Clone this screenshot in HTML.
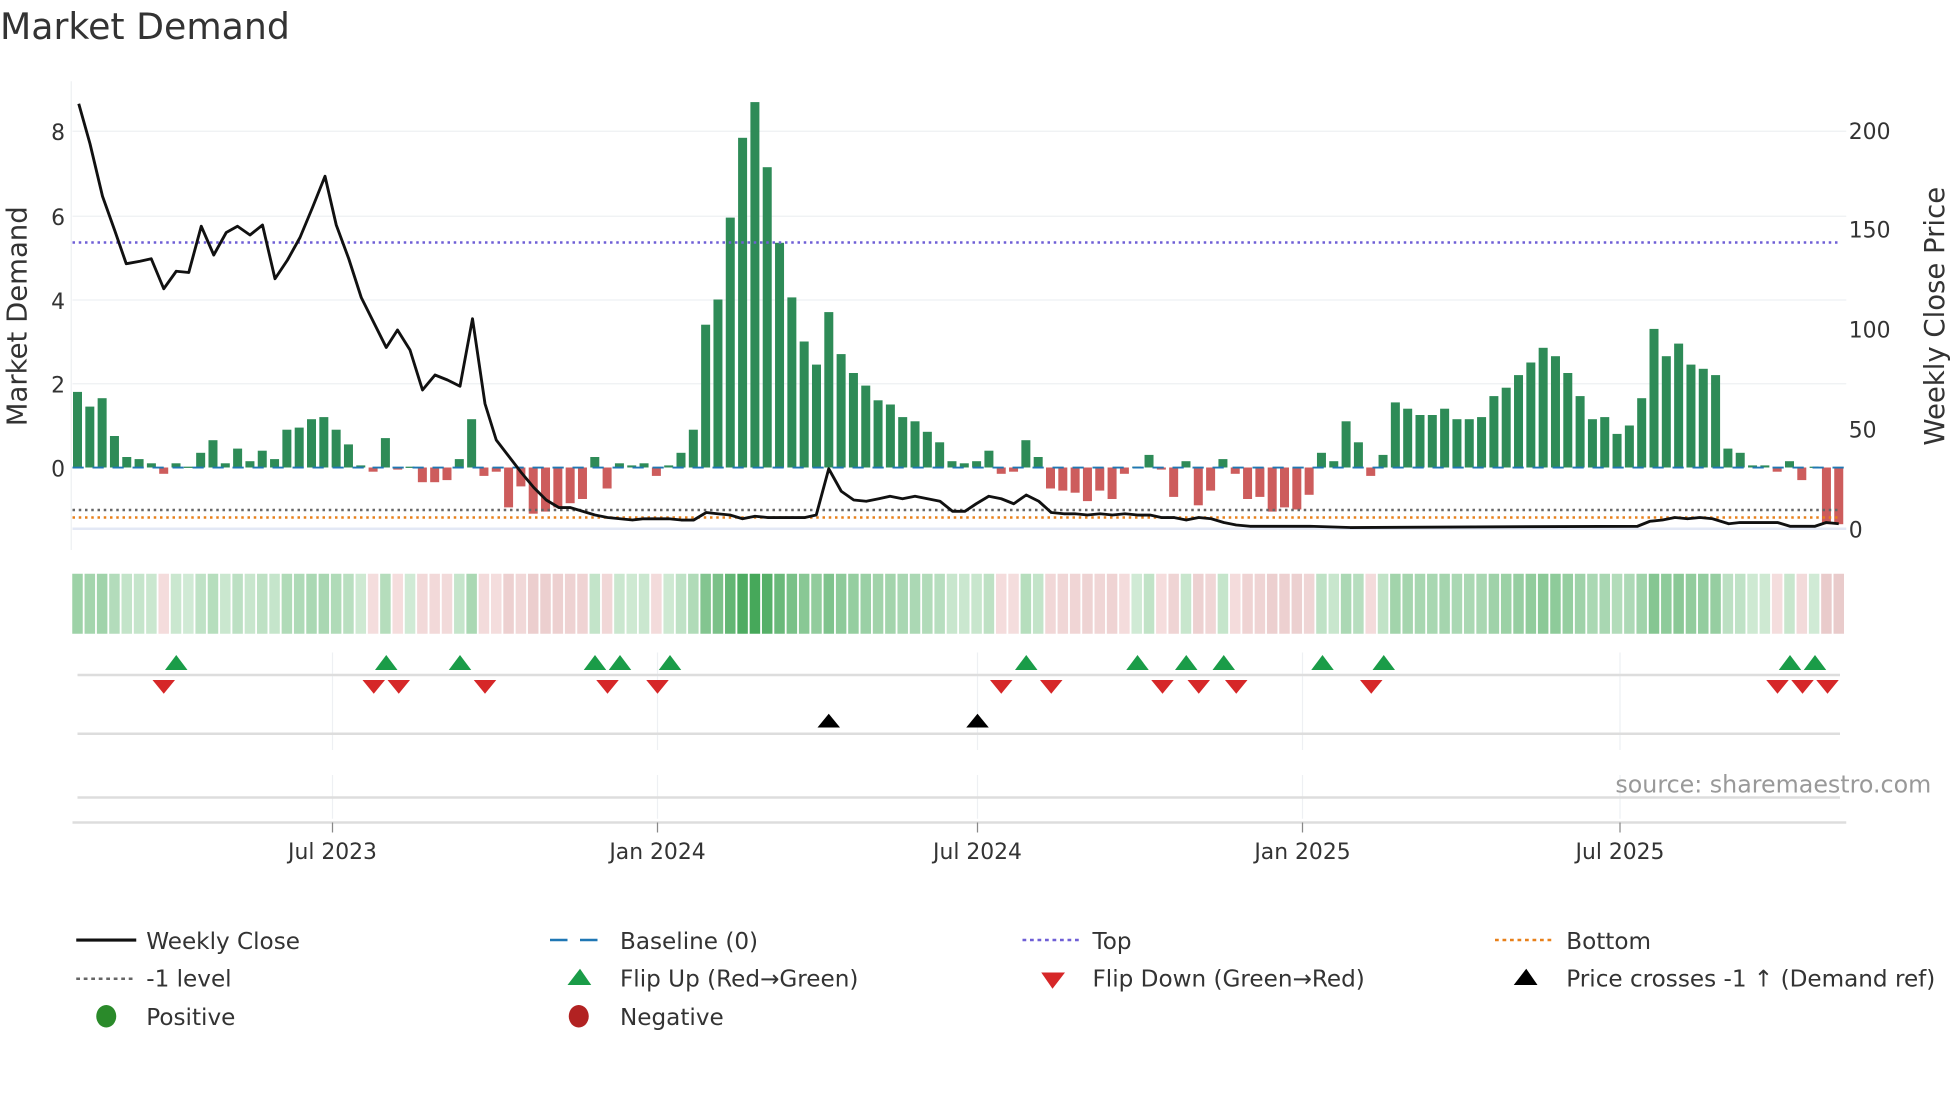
<!DOCTYPE html>
<html><head><meta charset="utf-8"><style>
html,body{margin:0;padding:0;background:#fff;overflow:hidden}
svg{display:block;font-family:"DejaVu Sans","Liberation Sans",sans-serif}
</style></head><body>
<svg id="s" width="1960" height="1102" viewBox="0 0 1568 881.6" xmlns="http://www.w3.org/2000/svg">
<rect width="1568" height="882" fill="#fff"/>
<text x="0" y="31" font-size="29" fill="#333">Market Demand</text>
<g stroke="#eef0f3" stroke-width="1">
<line x1="58" x2="1477" y1="105" y2="105"/><line x1="58" x2="1477" y1="173" y2="173"/>
<line x1="58" x2="1477" y1="240" y2="240"/><line x1="58" x2="1477" y1="307" y2="307"/>
<line x1="57" x2="57" y1="65" y2="440"/>
<line x1="266" x2="266" y1="522" y2="600"/><line x1="526" x2="526" y1="522" y2="600"/>
<line x1="782" x2="782" y1="522" y2="600"/><line x1="1042" x2="1042" y1="522" y2="600"/><line x1="1296" x2="1296" y1="522" y2="600"/>
<line x1="266" x2="266" y1="620" y2="655"/><line x1="526" x2="526" y1="620" y2="655"/>
<line x1="782" x2="782" y1="620" y2="655"/><line x1="1042" x2="1042" y1="620" y2="655"/><line x1="1296" x2="1296" y1="620" y2="655"/>
</g>
<line x1="58" x2="1477" y1="423" y2="423" stroke="#e3e8f5" stroke-width="2"/>
<g id="bars"></g>
<line x1="58" x2="1477" y1="374" y2="374" stroke="#1f77b4" stroke-width="1.5" stroke-dasharray="9,7"/>
<line x1="58" x2="1472" y1="194" y2="194" stroke="#6f5fd6" stroke-width="2" stroke-dasharray="2,3"/>
<line x1="58" x2="1472" y1="408" y2="408" stroke="#666" stroke-width="2" stroke-dasharray="2,3"/>
<line x1="58" x2="1472" y1="414" y2="414" stroke="#e8801a" stroke-width="2" stroke-dasharray="2,3"/>
<polyline id="price" fill="none" stroke="#111" stroke-width="2.3" stroke-linejoin="round"/>
<g id="heat"></g>
<g stroke="#ddd" stroke-width="2">
<line x1="62" x2="1472" y1="540" y2="540"/><line x1="62" x2="1472" y1="587" y2="587"/>
<line x1="62" x2="1472" y1="638" y2="638"/><line x1="58" x2="1477" y1="658" y2="658"/>
</g>
<g stroke="#888" stroke-width="1">
<line x1="266" x2="266" y1="658" y2="666"/><line x1="526" x2="526" y1="658" y2="666"/>
<line x1="782" x2="782" y1="658" y2="666"/><line x1="1042" x2="1042" y1="658" y2="666"/><line x1="1296" x2="1296" y1="658" y2="666"/>
</g>
<g id="tri"></g>
<g font-size="17.5" fill="#333">
<text x="52" y="112" text-anchor="end">8</text><text x="52" y="180" text-anchor="end">6</text>
<text x="52" y="247" text-anchor="end">4</text><text x="52" y="314" text-anchor="end">2</text>
<text x="52" y="381" text-anchor="end">0</text>
<text x="1479" y="111">200</text><text x="1479" y="190">150</text><text x="1479" y="270">100</text>
<text x="1479" y="350">50</text><text x="1479" y="430">0</text>
<text x="266" y="687" text-anchor="middle">Jul 2023</text>
<text x="526" y="687" text-anchor="middle">Jan 2024</text>
<text x="782" y="687" text-anchor="middle">Jul 2024</text>
<text x="1042" y="687" text-anchor="middle">Jan 2025</text>
<text x="1296" y="687" text-anchor="middle">Jul 2025</text>
<text transform="translate(21,253) rotate(-90)" text-anchor="middle" font-size="22">Market Demand</text>
<text transform="translate(1555,253) rotate(-90)" text-anchor="middle" font-size="22">Weekly Close Price</text>
<text x="1545" y="634" text-anchor="end" fill="#999" font-size="19">source: sharemaestro.com</text>
</g>
<g font-size="18.5" fill="#333">
<line x1="61" x2="109" y1="752" y2="752" stroke="#111" stroke-width="2.5"/><text x="117" y="759">Weekly Close</text>
<line x1="440" x2="488" y1="752" y2="752" stroke="#1f77b4" stroke-width="2" stroke-dasharray="14,10"/><text x="496" y="759">Baseline (0)</text>
<line x1="818" x2="866" y1="752" y2="752" stroke="#6f5fd6" stroke-width="2" stroke-dasharray="3,3"/><text x="874" y="759">Top</text>
<line x1="1196" x2="1244" y1="752" y2="752" stroke="#e8801a" stroke-width="2" stroke-dasharray="3,3"/><text x="1253" y="759">Bottom</text>
<line x1="61" x2="109" y1="783" y2="783" stroke="#666" stroke-width="2" stroke-dasharray="3,3"/><text x="117" y="789">-1 level</text>
<polygon points="454,788 464,775 473,788" fill="#1a9c48"/><text x="496" y="789">Flip Up (Red→Green)</text>
<polygon points="833,778 852,778 842,791" fill="#d62728"/><text x="874" y="789">Flip Down (Green→Red)</text>
<polygon points="1211,788 1221,775 1230,788" fill="#000"/><text x="1253" y="789">Price crosses -1 ↑ (Demand ref)</text>
<ellipse cx="85" cy="813" rx="8" ry="9" fill="#2a8a2a"/><text x="117" y="820">Positive</text>
<ellipse cx="463" cy="813" rx="8" ry="9" fill="#b22222"/><text x="496" y="820">Negative</text>
</g>
</svg>
<script>
var v=[1.8,1.45,1.65,0.75,0.25,0.2,0.1,-0.15,0.1,0.02,0.35,0.65,0.1,0.45,0.15,0.4,0.2,0.9,0.95,1.15,1.2,0.9,0.55,0.05,-0.1,0.7,-0.05,0.02,-0.35,-0.35,-0.3,0.2,1.15,-0.2,-0.1,-0.95,-0.45,-1.1,-1.05,-0.95,-0.85,-0.75,0.25,-0.5,0.1,0.05,0.1,-0.2,0.05,0.35,0.9,3.4,4.0,5.95,7.85,8.7,7.15,5.35,4.05,3.0,2.45,3.7,2.7,2.25,1.95,1.6,1.5,1.2,1.1,0.85,0.6,0.15,0.1,0.15,0.4,-0.15,-0.1,0.65,0.25,-0.5,-0.55,-0.6,-0.8,-0.55,-0.75,-0.15,0.02,0.3,-0.05,-0.7,0.15,-0.9,-0.55,0.2,-0.15,-0.75,-0.7,-1.05,-0.95,-1.0,-0.65,0.35,0.15,1.1,0.6,-0.2,0.3,1.55,1.4,1.25,1.25,1.4,1.15,1.15,1.2,1.7,1.9,2.2,2.5,2.85,2.65,2.25,1.7,1.15,1.2,0.8,1.0,1.65,3.3,2.65,2.95,2.45,2.35,2.2,0.45,0.35,0.05,0.05,-0.1,0.15,-0.3,0.02,-1.35,-1.35];
var NS="http://www.w3.org/2000/svg";
function el(g,t,a){var e=document.createElementNS(NS,t);for(var k in a)e.setAttribute(k,a[k]);document.getElementById(g).appendChild(e);}
var step=(1471-62)/(v.length-1);
v.forEach(function(d,i){var x=62+i*step;var h=Math.abs(d)*33.6;
 el("bars","rect",{x:x-3.6,y:d>=0?374-h:374,width:7.2,height:Math.max(h,1),fill:d>=0?"#2e8b57":"#cd5c5c"});
 var c;if(d>=0){var t=Math.min(d/8.7,1);var l=Math.pow(t,0.6);
 var r=Math.round(212-(212-70)*l),g=Math.round(236-(236-168)*l),b=Math.round(216-(216-90)*l);c="rgb("+r+","+g+","+b+")";}
 else{var t2=Math.min(-d/1.4,1);c="rgb("+Math.round(245-12*t2)+","+Math.round(222-20*t2)+","+Math.round(222-20*t2)+")";}
 el("heat","rect",{x:x-4.2,y:459,width:8.4,height:48,fill:c});
});
var p="63,83 72,115 82,157 92,185 101,211 112,209 121,207 131,231 141,217 151,218 161,181 171,204 181,186 190,181 200,188 210,180 220,223 230,208 240,190 250,166 260,141 269,180 279,207 289,238 299,258 309,278 318,264 328,280 338,312 348,300 358,304 368,309 378,255 388,323 397,352 407,365 417,378 427,390 437,400 447,406 456,406 466,409 476,412 486,414 496,415 506,416 515,415 525,415 535,415 545,416 555,416 565,410 574,411 584,412 594,415 604,413 614,414 624,414 634,414 644,414 653,412 663,375 673,393 683,400 693,401 703,399 712,397 722,399 732,397 742,399 752,401 762,409 772,409 781,403 791,397 801,399 811,403 821,396 831,401 841,410 851,411 860,411 870,412 880,411 890,412 900,411 910,412 920,412 929,414 939,414 949,416 959,414 969,415 979,418 989,420 1000,421 1048,421 1080,422 1310,421 1320,417 1330,416 1340,414 1350,415 1360,414 1370,415 1383,419 1392,418 1422,418 1432,421 1452,421 1461,418 1471,419";
document.getElementById("price").setAttribute("points",p);
[141,309,368,476,496,536,821,910,949,979,1058,1107,1432,1452].forEach(function(x){el("tri","polygon",{points:(x-9)+",536 "+x+",524 "+(x+9)+",536",fill:"#1a9c48"});});
[131,299,319,388,486,526,801,841,930,959,989,1097,1422,1442,1462].forEach(function(x){el("tri","polygon",{points:(x-9)+",544 "+(x+9)+",544 "+x+",555",fill:"#d62728"});});
[663,782].forEach(function(x){el("tri","polygon",{points:(x-9)+",582 "+x+",571 "+(x+9)+",582",fill:"#000"});});
</script>
</body></html>
